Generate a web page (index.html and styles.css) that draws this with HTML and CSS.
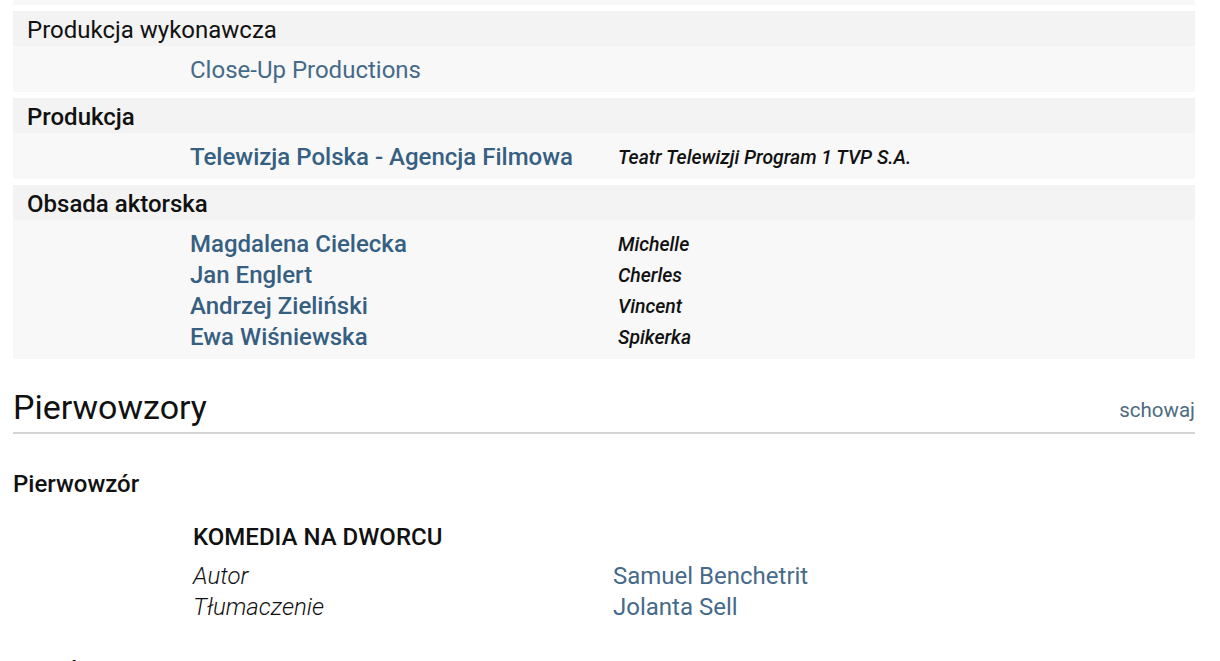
FILE: index.html
```html
<!DOCTYPE html>
<html lang="pl">
<head>
<meta charset="utf-8">
<link rel="stylesheet" href="styles.css">
</head>
<body>
<div class="page">
  <div class="block block-top"></div>

  <div class="block">
    <div class="block-head">Produkcja wykonawcza</div>
    <div class="block-body">
      <div class="row"><a class="name regular">Close-Up Productions</a></div>
    </div>
  </div>

  <div class="block">
    <div class="block-head bold">Produkcja</div>
    <div class="block-body">
      <div class="row"><a class="name">Telewizja Polska - Agencja Filmowa</a><span class="role">Teatr Telewizji Program 1 TVP S.A.</span></div>
    </div>
  </div>

  <div class="block">
    <div class="block-head bold">Obsada aktorska</div>
    <div class="block-body">
      <div class="row"><a class="name">Magdalena Cielecka</a><span class="role">Michelle</span></div>
      <div class="row"><a class="name">Jan Englert</a><span class="role">Cherles</span></div>
      <div class="row"><a class="name">Andrzej Zieliński</a><span class="role">Vincent</span></div>
      <div class="row"><a class="name">Ewa Wiśniewska</a><span class="role">Spikerka</span></div>
    </div>
  </div>

  <div class="section-head">
    <h2>Pierwowzory</h2>
    <a class="toggle">schowaj</a>
  </div>

  <h3 class="sub">Pierwowzór</h3>
  <div class="orig">
    <div class="orig-title">KOMEDIA NA DWORCU</div>
    <div class="orig-row"><span class="orig-label">Autor</span><a class="orig-val">Samuel Benchetrit</a></div>
    <div class="orig-row"><span class="orig-label">Tłumaczenie</span><a class="orig-val">Jolanta Sell</a></div>
  </div>

  <h3 class="sub next">Muzyka</h3>
</div>
</body>
</html>
```

FILE: styles.css
```css
html, body {
  margin: 0;
  padding: 0;
  background: #fff;
  overflow: hidden;
  height: 661px;
}
body {
  font-family: Roboto, "Liberation Sans", Arial, sans-serif;
  color: #111;
}
.page {
  width: 1182px;
  margin-left: 13px;
  display: flex;
  flex-direction: column;
}
.block {
  background: #f8f8f8;
  margin-bottom: 6px;
}
.block-top {
  height: 5px;
}
.block-head {
  background: #f3f3f3;
  height: 35px;
  line-height: 39px;
  padding-left: 14px;
  font-size: 24px;
  font-weight: 400;
}
.block-head.bold {
  font-weight: 500;
}
.block-body {
  padding: 8.5px 0 6.5px 177px;
}
.row {
  display: flex;
  align-items: center;
  height: 31px;
}
.name {
  width: 428px;
  flex: none;
  color: #365f82;
  font-size: 24px;
  font-weight: 500;
  white-space: nowrap;
}
.name.regular {
  font-weight: 400;
  color: #466a8a;
}
.role {
  font-size: 19.4px;
  font-style: italic;
  font-weight: 500;
  color: #111;
}
.section-head {
  display: flex;
  justify-content: space-between;
  align-items: flex-end;
  margin-top: 22px;
  padding-bottom: 5px;
  border-bottom: 2px solid #d4d4d4;
}
.section-head h2 {
  margin: 0;
  font-size: 34px;
  font-weight: 400;
  line-height: 40px;
  color: #111;
}
.toggle {
  font-size: 20.5px;
  color: #4e6b82;
  line-height: 24px;
  margin-bottom: 5px;
}
.sub {
  margin: 36px 0 0 0;
  font-size: 24px;
  font-weight: 500;
  line-height: 28px;
}
.orig {
  padding-left: 180px;
  margin-top: 25px;
}
.orig-title {
  font-size: 24px;
  font-weight: 500;
  line-height: 28px;
  margin-bottom: 9.5px;
}
.orig-row {
  display: flex;
  height: 31px;
  align-items: center;
  font-size: 24px;
}
.orig-label {
  width: 420px;
  flex: none;
  font-style: italic;
  font-weight: 300;
}
.orig-val {
  color: #466a8a;
}
.sub.next {
  margin-top: 33px;
}
```
